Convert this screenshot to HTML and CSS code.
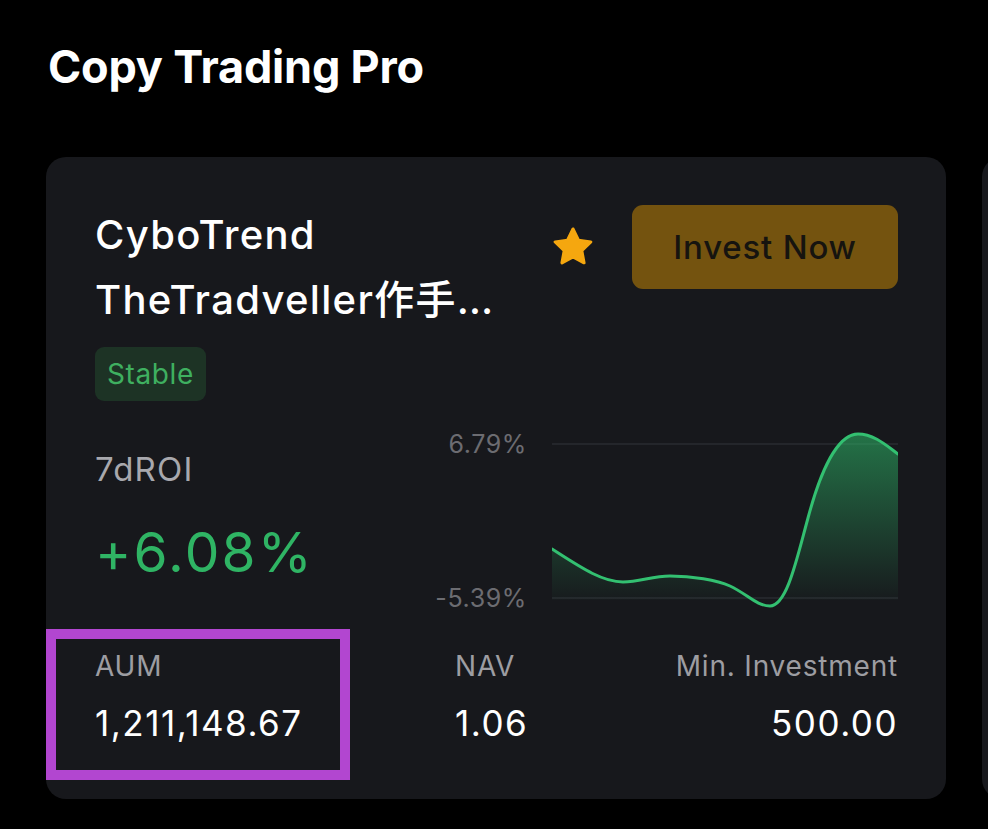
FILE: index.html
```html
<!DOCTYPE html>
<html lang="en">
<head>
    <meta charset="UTF-8">
    <meta name="viewport" content="width=device-width, initial-scale=1.0">
    <title>Copy Trading Pro</title>
    <link rel="stylesheet" href="styles.css">
</head>
<body>
    <!-- Section title -->
    <h1 class="section-title">Copy Trading Pro</h1>

    <!-- Cards row -->
    <div class="cards-row">
        <div class="trader-card">
            <!-- Header -->
            <div class="card-header">
                <div class="trader-info">
                    <div class="trader-name">CyboTrend<br>TheTradveller作手…</div>
                    <span class="tag-stable">Stable</span>
                </div>
                <div class="card-actions">
                    <svg class="star-icon" viewBox="0 0 24 24" width="46" height="46">
                        <path d="M12 2.6l2.85 5.9 6.45.85-4.72 4.5 1.18 6.4L12 17.15l-5.76 3.1 1.18-6.4L2.7 9.350l6.45-.85z" fill="#f5a70f" stroke="#f5a70f" stroke-width="1.6" stroke-linejoin="round"/>
                    </svg>
                    <button class="invest-btn">Invest Now</button>
                </div>
            </div>

            <!-- ROI + chart -->
            <div class="card-middle">
                <div class="roi-block">
                    <div class="roi-label">7dROI</div>
                    <div class="roi-value">+6.08%</div>
                </div>
                <div class="chart">
                    <div class="chart-labels">
                        <span>6.79%</span>
                        <span>-5.39%</span>
                    </div>
                    <svg class="chart-svg" viewBox="0 0 346 182" width="346" height="182">
                        <defs>
                            <linearGradient id="areaFill" x1="0" y1="0" x2="0" y2="1">
                                <stop offset="0" stop-color="#2ebd6b" stop-opacity="0.55"/>
                                <stop offset="1" stop-color="#2ebd6b" stop-opacity="0"/>
                            </linearGradient>
                        </defs>
                        <line x1="0" y1="16" x2="346" y2="16" stroke="#2a2b30" stroke-width="1.5"/>
                        <line x1="0" y1="170" x2="346" y2="170" stroke="#2a2b30" stroke-width="1.5"/>
                        <path d="M0,121 C28,139 50,154 71,154 C88,154 100,148 118,148 C140,148 165,152 178,158 C195,166 205,178 218,178 C235,178 245,130 256,90 C268,45 285,6 306,6 C322,6 335,18 346,26 L346,172 L0,172 Z" fill="url(#areaFill)"/>
                        <path d="M0,121 C28,139 50,154 71,154 C88,154 100,148 118,148 C140,148 165,152 178,158 C195,166 205,178 218,178 C235,178 245,130 256,90 C268,45 285,6 306,6 C322,6 335,18 346,26" fill="none" stroke="#33c071" stroke-width="3" stroke-linecap="round"/>
                    </svg>
                </div>
            </div>

            <!-- Stats -->
            <div class="card-stats">
                <div class="stat">
                    <div class="stat-label">AUM</div>
                    <div class="stat-value">1,211,148.67</div>
                </div>
                <div class="stat">
                    <div class="stat-label">NAV</div>
                    <div class="stat-value">1.06</div>
                </div>
                <div class="stat stat-right">
                    <div class="stat-label">Min. Investment</div>
                    <div class="stat-value">500.00</div>
                </div>
            </div>

            <!-- Highlight box -->
            <div class="highlight-box"></div>
        </div>
        <div class="trader-card peek"></div>
    </div>
</body>
</html>
```

FILE: styles.css
```css
* {
    margin: 0;
    padding: 0;
    box-sizing: border-box;
    font-family: Inter, "Noto Sans CJK SC", sans-serif;
}

body {
    background-color: #000;
    color: #fff;
    width: 988px;
    height: 829px;
    overflow: hidden;
}

/* Title */
.section-title {
    font-size: 45px;
    font-weight: 700;
    letter-spacing: -0.2px;
    line-height: 1;
    padding: 44px 0 0 48px;
}

/* Cards */
.cards-row {
    display: flex;
    gap: 36px;
    padding-left: 46px;
    margin-top: 68px;
    overflow: hidden;
}

.trader-card {
    position: relative;
    flex: 0 0 900px;
    height: 642px;
    background-color: #17181c;
    border-radius: 20px;
    padding: 48px 48px 0 49px;
}

.trader-card.peek {
    flex: 0 0 900px;
}

/* Header */
.card-header {
    display: flex;
    justify-content: space-between;
    align-items: flex-start;
}

.trader-name {
    font-size: 40px;
    font-weight: 500;
    letter-spacing: 1.3px;
    line-height: 65px;
    margin-top: -3px;
}

.tag-stable {
    display: inline-block;
    margin-top: 15px;
    padding: 0 12px;
    height: 54px;
    line-height: 54px;
    border-radius: 9px;
    background-color: #1d3325;
    color: #3fb060;
    font-size: 28px;
    letter-spacing: 0.6px;
}

.card-actions {
    display: flex;
    align-items: center;
    gap: 36px;
}

.invest-btn {
    width: 266px;
    height: 84px;
    border: none;
    border-radius: 11px;
    background-color: #74530f;
    color: #16140f;
    font-size: 33px;
    font-weight: 500;
    letter-spacing: 0.8px;
    cursor: pointer;
}

/* ROI + chart */
.card-middle {
    display: flex;
    justify-content: space-between;
    margin-top: 27px;
}

.roi-block {
    padding-top: 21px;
}

.roi-label {
    font-size: 33px;
    color: #a8a8ad;
    line-height: 40px;
    letter-spacing: 1.2px;
}

.roi-value {
    font-size: 55px;
    color: #2fb464;
    line-height: 66px;
    margin-top: 30px;
    letter-spacing: 2.2px;
}

.chart {
    display: flex;
    gap: 25px;
}

.chart-labels {
    display: flex;
    flex-direction: column;
    justify-content: space-between;
    align-items: flex-end;
    padding: 4px 0 0;
    font-size: 25px;
    letter-spacing: 0.6px;
    color: #6c6c71;
    line-height: 24px;
}

.chart-svg {
    display: block;
}

/* Stats */
.card-stats {
    display: grid;
    grid-template-columns: 360px 1fr auto;
    margin-top: 36px;
}

.stat-right {
    text-align: right;
}

.stat-label {
    font-size: 28px;
    color: #9d9da2;
    line-height: 40px;
    letter-spacing: 0.8px;
}

.stat-value {
    font-size: 35px;
    line-height: 44px;
    margin-top: 15px;
    letter-spacing: 1.5px;
}

/* Annotation frame */
.highlight-box {
    position: absolute;
    left: 0;
    top: 472px;
    width: 304px;
    height: 151px;
    border: 10px solid #b246d0;
}
```
